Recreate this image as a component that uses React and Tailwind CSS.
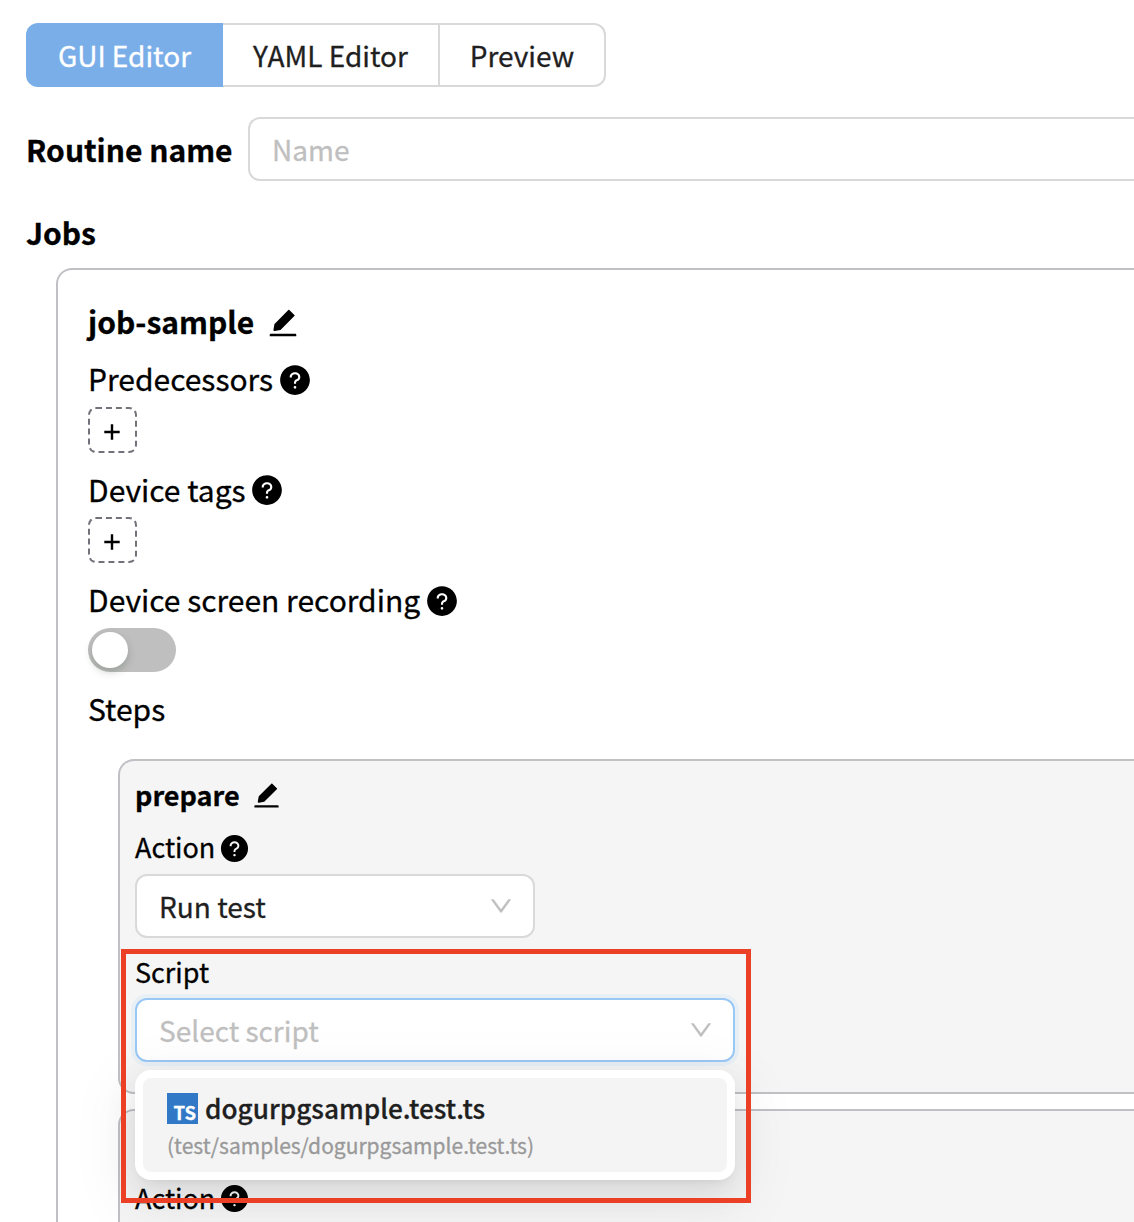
import { AiFillEdit, AiFillQuestionCircle, AiOutlineDown } from "react-icons/ai";

function Tab({ label, className }) {
  return (
    <button className={`flex h-16 items-center justify-center pb-px text-[28px] ${className}`}>
      {label}
    </button>
  );
}

function JobField({ label, children, className = "gap-[5px]" }) {
  return (
    <div>
      <div className={`flex h-[54px] items-center text-[30px] ${className}`}>
        <span className="-mt-1">{label}</span>
        <AiFillQuestionCircle className="size-[34px] shrink-0" />
      </div>
      {children}
    </div>
  );
}

function AddButton() {
  return (
    <button className="flex h-[46px] w-[49px] items-center justify-center rounded-lg border-2 border-dashed border-[#72727a] text-black">
      <svg viewBox="0 0 16 16" className="mt-[3px] mr-px size-4" fill="none" stroke="currentColor" strokeWidth="2.4">
        <path d="M8 0.3V15.7M0.3 8H15.7" />
      </svg>
    </button>
  );
}

function ActionLabel() {
  return (
    <div className="flex h-[52px] items-center gap-1 text-[27px]">
      <span className="-mt-1">Action</span>
      <AiFillQuestionCircle className="size-[31px] shrink-0" />
    </div>
  );
}

function Select({ text, className }) {
  return (
    <div className={`flex h-16 items-center justify-between rounded-xl border-2 bg-white pr-[19px] pl-[22px] text-[28px] ${className}`}>
      <span>{text}</span>
      <AiOutlineDown className="size-[26px] text-[#bfbfbf]" strokeWidth="18" />
    </div>
  );
}

function ScriptMenu() {
  return (
    <div className="absolute top-[72px] left-0 z-10 h-[110px] w-[600px] rounded-2xl bg-white p-2 shadow-[0_12px_32px_0_rgba(0,0,0,0.08),0_6px_12px_-8px_rgba(0,0,0,0.12),0_18px_56px_16px_rgba(0,0,0,0.05)]">
      <div className="flex h-[94px] flex-col rounded-lg bg-[#f4f4f4] pl-6">
        <div className="mt-2 flex h-11 items-center gap-[7px] text-[26.2px] font-medium text-[#1f1f1f]">
          <span className="flex h-[31px] w-[31px] items-end justify-end bg-[#3178c6] pr-0.5 text-[18.5px] leading-[23px] font-bold text-white">
            TS
          </span>
          <span>dogurpgsample.test.ts</span>
        </div>
        <div className="h-8 text-[21px] leading-[30px] text-[#999999]">(test/samples/dogurpgsample.test.ts)</div>
      </div>
    </div>
  );
}

export default function App() {
  return (
    <div className="h-[1222px] w-[1134px] overflow-hidden bg-white pt-[23px] pl-[26px] font-['Noto_Sans_CJK_KR',sans-serif] leading-none text-black [-webkit-text-stroke:0.3px]">
      <div className="flex">
        <Tab label="GUI Editor" className="w-[197px] rounded-l-xl bg-[#7aaee8] text-white" />
        <Tab label="YAML Editor" className="w-[217px] border-y-2 border-r-2 border-[#d9d9d9] text-[#1f1f1f]" />
        <Tab label="Preview" className="w-[166px] rounded-r-xl border-y-2 border-r-2 border-[#d9d9d9] text-[#1f1f1f]" />
      </div>

      <div className="mt-[30px] flex items-center">
        <div className="w-[222px] shrink-0 text-[30px] font-bold whitespace-nowrap">Routine name</div>
        <div className="flex h-16 flex-1 items-center rounded-l-xl border-y-2 border-l-2 border-[#d9d9d9] pl-[22px] text-[28px] text-[#bfbfbf]">
          Name
        </div>
      </div>

      <div className="mt-[31px] flex h-10 items-center text-[30px] font-bold">Jobs</div>

      <div className="mt-4 ml-[30px] h-[1000px] rounded-tl-2xl border-t-2 border-l-2 border-[#c0c0c5] pl-[30px]">
        <div className="mt-[26px] flex h-[54px] items-center gap-3 text-[30px] font-bold">
          <span className="-mt-1">job-sample</span>
          <AiFillEdit className="size-[34px]" />
        </div>
        <div className="mt-[3px] flex flex-col">
          <JobField label="Predecessors">
            <AddButton />
          </JobField>
          <div className="mt-[10px]">
            <JobField label="Device tags" className="gap-1 [&>span]:-mt-0.5">
              <AddButton />
            </JobField>
          </div>
          <div className="mt-[11px]">
            <JobField label="Device screen recording">
              <div className="flex h-11 w-[88px] items-center rounded-full bg-[#bfbfbf] pl-1">
                <span className="size-9 rounded-full bg-white shadow-[0_4px_8px_0_rgba(0,35,11,0.2)]" />
              </div>
            </JobField>
          </div>
        </div>
        <div className="mt-[9px] flex h-[54px] items-center text-[30px]">Steps</div>

        <div className="mt-6 ml-[30px] flex flex-col gap-[15px]">
          <div className="h-[335px] rounded-l-2xl border-y-2 border-l-2 border-[#c0c0c5] bg-[#f5f5f5] pl-[15px]">
            <div className="mt-2 flex h-[52px] items-center gap-[11px] text-[27px] font-bold">
              <span className="-mt-0.5">prepare</span>
              <AiFillEdit className="size-[31px]" />
            </div>
            <div className="mt-px">
              <ActionLabel />
            </div>
            <Select text="Run test" className="w-[400px] border-[#d9d9d9] text-[#1f1f1f]" />
            <div className="mt-2 flex h-[52px] items-center pb-0.5 text-[27px]">Script</div>
            <div className="relative w-[600px]">
              <Select
                text="Select script"
                className="border-[#9ac8f5] text-[#bfbfbf] shadow-[0_0_0_4px_rgba(5,145,255,0.05)]"
              />
              <ScriptMenu />
              <div className="pointer-events-none absolute -top-[49.5px] -left-[14px] z-20 h-[254px] w-[630px] border-5 border-[#ec4026]" />
            </div>
          </div>
          <div className="h-[335px] rounded-l-2xl border-y-2 border-l-2 border-[#c0c0c5] bg-[#f5f5f5] pl-[15px]">
            <div className="mt-[9px] h-[52px]" />
            <div className="[&_span]:-mt-0.5">
              <ActionLabel />
            </div>
          </div>
        </div>
      </div>
    </div>
  );
}
